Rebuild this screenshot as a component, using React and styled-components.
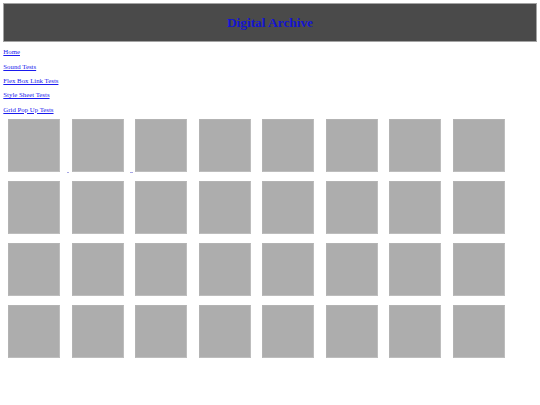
import React from "react";
import styled, { createGlobalStyle } from "styled-components";

const Global = createGlobalStyle`
  html, body { margin: 0; padding: 0; background: #ffffff; }
  body {
    margin: 3.33px;
    font-family: "Liberation Serif", "Times New Roman", serif;
    font-size: 6.67px;
  }
`;

const Header = styled.header`
  height: 36.4px;
  background: #4a4a4a;
  border: 1px solid #a3a3a3;
  display: flex;
  align-items: center;
  justify-content: center;
`;

const Title = styled.h1`
  margin: 0;
  font-size: 13.33px;
  font-weight: bold;
  line-height: 15px;
  color: #1414d0;
`;

const Nav = styled.nav`
  display: flex;
  flex-direction: column;
  align-items: flex-start;
  gap: 6.67px;
  padding: 6.6px 0 5.9px;
`;

const NavLink = styled.a`
  font-size: 6.8px;
  line-height: 7.67px;
  color: #1a1aee;
  text-decoration: underline;
`;

const Grid = styled.div`
  display: grid;
  grid-template-columns: repeat(8, 52px);
  column-gap: 11.5px;
  row-gap: 8.6px;
  padding-left: 5px;
`;

const Cell = styled.div`
  display: flex;
  align-items: flex-end;
  width: 52px;
`;

const Tile = styled.div`
  flex: none;
  width: 52px;
  height: 53.3px;
  box-sizing: border-box;
  background: #adadad;
  border: 1px solid #bdbdbd;
  border-top-color: #b3b3b3;
  border-left-color: #b3b3b3;
`;

const Mark = styled.span`
  flex: none;
  width: 2.3px;
  height: 1px;
  margin-left: 6.4px;
  margin-right: -8.7px;
  margin-bottom: -1px;
  background: #a8a8e6;
`;

const links = ["Home", "Sound Tests", "Flex Box Link Tests", "Style Sheet Tests", "Grid Pop Up Tests"];

export default function App() {
  const tiles = Array.from({ length: 32 }, (_, i) => i);
  return (
    <>
      <Global />
      <Header>
        <Title>Digital Archive</Title>
      </Header>
      <Nav>
        {links.map((l) => (
          <NavLink key={l} href="#">{l}</NavLink>
        ))}
      </Nav>
      <Grid>
        {tiles.map((i) => (
          <Cell key={i}>
            <Tile />
            {i < 2 && <Mark />}
          </Cell>
        ))}
      </Grid>
    </>
  );
}
